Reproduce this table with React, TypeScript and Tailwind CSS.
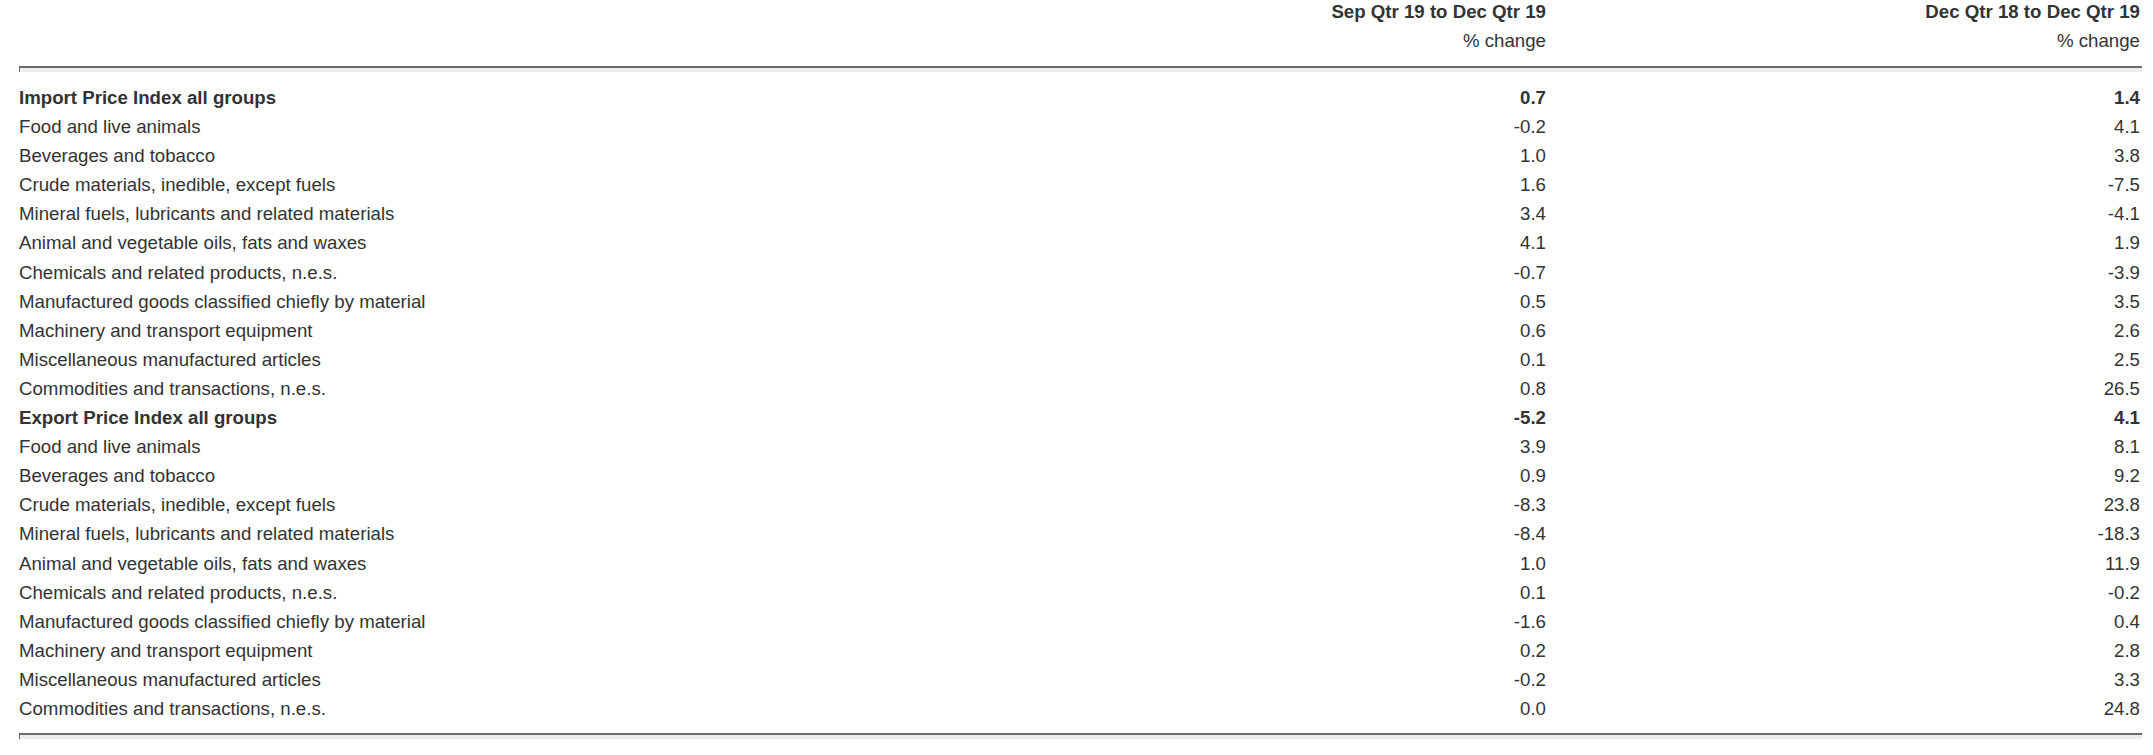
const rows: { label: string; q: string; y: string; bold?: boolean }[] = [
  { label: "Import Price Index all groups", q: "0.7", y: "1.4", bold: true },
  { label: "Food and live animals", q: "-0.2", y: "4.1" },
  { label: "Beverages and tobacco", q: "1.0", y: "3.8" },
  { label: "Crude materials, inedible, except fuels", q: "1.6", y: "-7.5" },
  { label: "Mineral fuels, lubricants and related materials", q: "3.4", y: "-4.1" },
  { label: "Animal and vegetable oils, fats and waxes", q: "4.1", y: "1.9" },
  { label: "Chemicals and related products, n.e.s.", q: "-0.7", y: "-3.9" },
  { label: "Manufactured goods classified chiefly by material", q: "0.5", y: "3.5" },
  { label: "Machinery and transport equipment", q: "0.6", y: "2.6" },
  { label: "Miscellaneous manufactured articles", q: "0.1", y: "2.5" },
  { label: "Commodities and transactions, n.e.s.", q: "0.8", y: "26.5" },
  { label: "Export Price Index all groups", q: "-5.2", y: "4.1", bold: true },
  { label: "Food and live animals", q: "3.9", y: "8.1" },
  { label: "Beverages and tobacco", q: "0.9", y: "9.2" },
  { label: "Crude materials, inedible, except fuels", q: "-8.3", y: "23.8" },
  { label: "Mineral fuels, lubricants and related materials", q: "-8.4", y: "-18.3" },
  { label: "Animal and vegetable oils, fats and waxes", q: "1.0", y: "11.9" },
  { label: "Chemicals and related products, n.e.s.", q: "0.1", y: "-0.2" },
  { label: "Manufactured goods classified chiefly by material", q: "-1.6", y: "0.4" },
  { label: "Machinery and transport equipment", q: "0.2", y: "2.8" },
  { label: "Miscellaneous manufactured articles", q: "-0.2", y: "3.3" },
  { label: "Commodities and transactions, n.e.s.", q: "0.0", y: "24.8" },
];

function Rule() {
  return <div className="h-[6px] border-t-2 border-l border-[#6b6b6b] bg-[#ededed]" />;
}

export default function App() {
  return (
    <div className="min-h-[755px] bg-white pl-[19px] pr-[11px] pt-[1px] font-['Liberation_Sans',Arial,sans-serif] text-[18.67px] text-[#333]">
      {/* header */}
      <div className="grid grid-cols-[1fr_594px_594px] pr-[2px] leading-[21px]">
        <div />
        <div className="text-right font-bold">Sep Qtr 19 to Dec Qtr 19</div>
        <div className="text-right font-bold">Dec Qtr 18 to Dec Qtr 19</div>
        <div className="mt-[8px]" />
        <div className="mt-[8px] text-right">% change</div>
        <div className="mt-[8px] text-right">% change</div>
      </div>

      <div className="mt-[15px]">
        <Rule />
      </div>

      {/* body */}
      <div className="mt-[11px] flex flex-col pr-[2px]">
        {rows.map((r, i) => (
          <div
            key={i}
            className={`grid h-[29.1px] grid-cols-[1fr_594px_594px] leading-[29.1px] ${r.bold ? "font-bold" : ""}`}
          >
            <div>{r.label}</div>
            <div className="text-right">{r.q}</div>
            <div className="text-right">{r.y}</div>
          </div>
        ))}
      </div>

      <div className="mt-[10px]">
        <Rule />
      </div>
    </div>
  );
}
